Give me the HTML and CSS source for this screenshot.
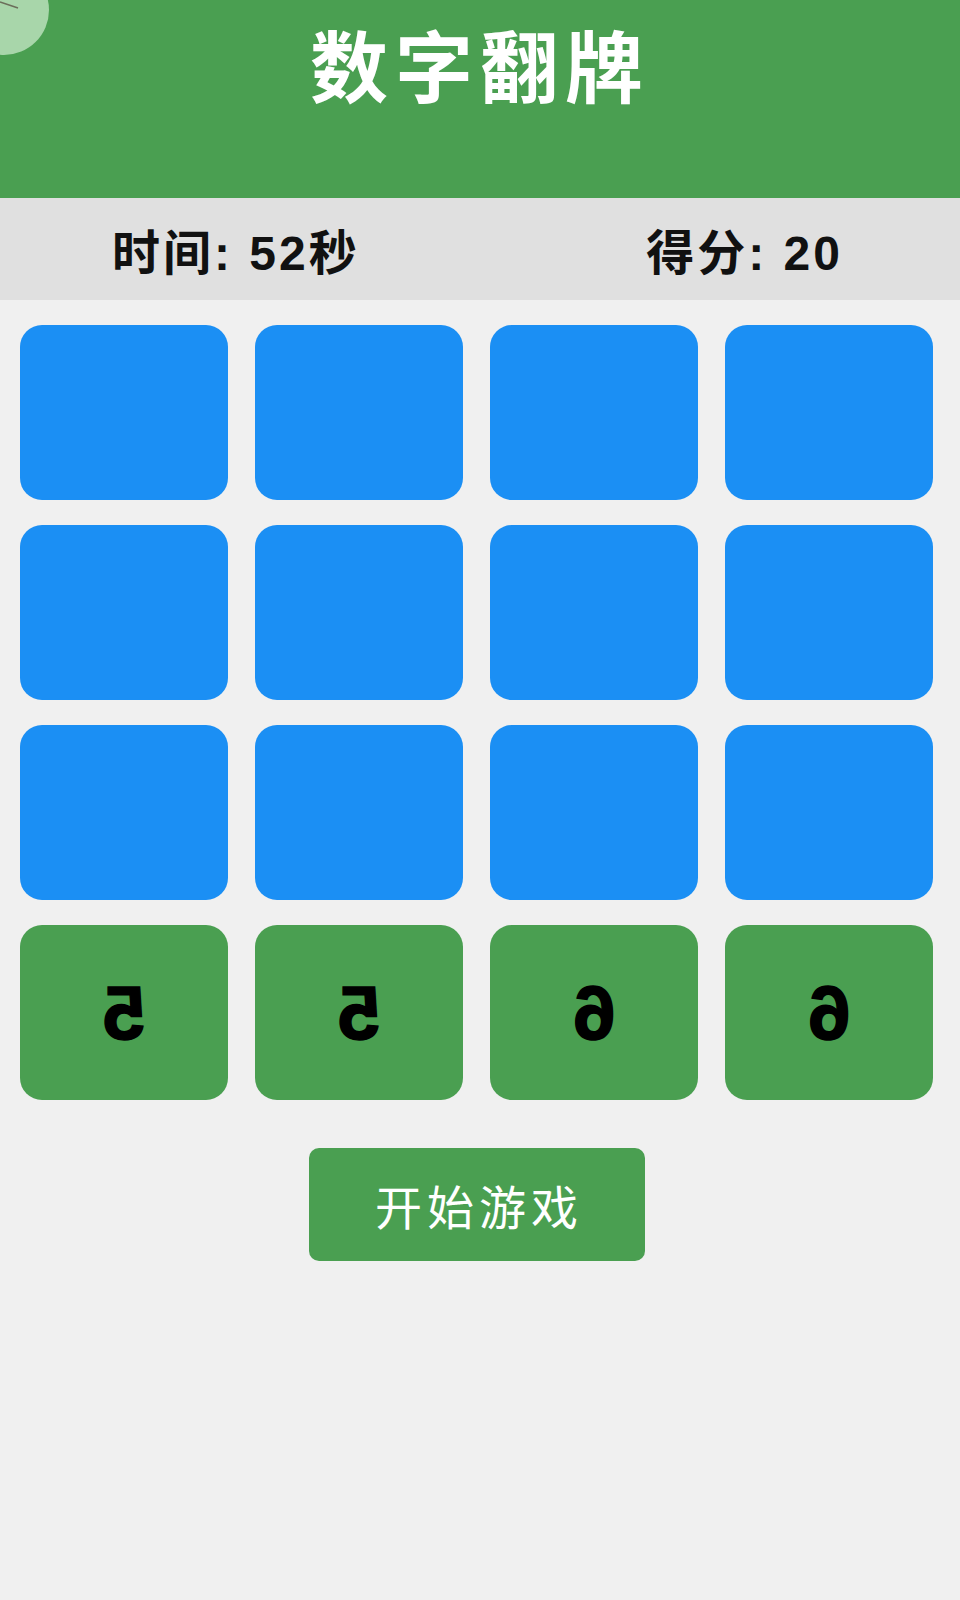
FILE: index.html
```html
<!DOCTYPE html>
<html lang="zh-CN">
<head>
    <meta charset="UTF-8">
    <meta name="viewport" content="width=device-width, initial-scale=1.0">
    <title>数字翻牌</title>
    <link rel="stylesheet" href="styles.css">
</head>
<body>
    <!-- touch ripple left over from the last tap -->
    <div class="ripple">
        <svg width="30" height="14" viewBox="0 0 30 14"><line x1="0" y1="2" x2="18" y2="8" stroke="#6b6e5a" stroke-width="1.5"/></svg>
    </div>

    <header class="header">
        <h1 class="title">数字翻牌</h1>
    </header>

    <div class="status">
        <span id="timer">时间: 52秒</span>
        <span id="score">得分: 20</span>
    </div>

    <div class="board" id="board">
        <div class="card"></div>
        <div class="card"></div>
        <div class="card"></div>
        <div class="card"></div>
        <div class="card"></div>
        <div class="card"></div>
        <div class="card"></div>
        <div class="card"></div>
        <div class="card"></div>
        <div class="card"></div>
        <div class="card"></div>
        <div class="card"></div>
        <div class="card matched"><span class="num">5</span></div>
        <div class="card matched"><span class="num">5</span></div>
        <div class="card matched"><span class="num">6</span></div>
        <div class="card matched"><span class="num">6</span></div>
    </div>

    <div class="actions">
        <button class="start-btn" id="startBtn">开始游戏</button>
    </div>
</body>
</html>
```

FILE: styles.css
```css
body {
    margin: 0;
    background: #f0f0f0;
    font-family: "Noto Sans CJK SC", "Noto Sans", sans-serif;
}
.ripple {
    position: absolute;
    left: -41px;
    top: -35px;
    width: 90px;
    height: 90px;
    border-radius: 50%;
    background: #a8d6aa;
    overflow: hidden;
}
.ripple svg {
    position: absolute;
    left: 41px;
    top: 35px;
}
.header {
    height: 198px;
    background: #4a9f51;
    padding-right: 7px;
}
.title {
    margin: 0;
    padding-top: 24px;
    font-size: 78px;
    line-height: 78px;
    font-weight: 700;
    letter-spacing: 7px;
    text-indent: 7px;
    color: #fff;
    text-align: center;
}
.status {
    height: 102px;
    background: #e0e0e0;
    display: flex;
    align-items: center;
    justify-content: space-between;
    padding: 0 117px 0 112px;
    font-family: "Liberation Sans", "Noto Sans CJK SC", sans-serif;
    font-size: 48px;
    font-weight: 700;
    letter-spacing: 3px;
    color: #111;
}
.board {
    display: grid;
    grid-template-columns: repeat(4, 208px);
    grid-auto-rows: 175px;
    column-gap: 27px;
    row-gap: 25px;
    padding: 25px 27px 0 20px;
}
.card {
    background: #1b8ff4;
    border-radius: 22px;
    display: flex;
    align-items: center;
    justify-content: center;
}
.card.matched {
    background: #4a9f51;
}
.num {
    display: inline-block;
    transform: scaleX(-1);
    font-family: "Liberation Sans", sans-serif;
    font-size: 76px;
    font-weight: 700;
    -webkit-text-stroke: 1.5px #000;
    color: #000;
}
.actions {
    padding: 48px 27px 0 20px;
    display: flex;
    justify-content: center;
}
.start-btn {
    width: 336px;
    height: 113px;
    border: none;
    border-radius: 10px;
    background: #4a9f51;
    color: #fff;
    font-family: "Noto Sans CJK SC", sans-serif;
    font-size: 47px;
    letter-spacing: 5px;
    text-indent: 5px;
}
```
